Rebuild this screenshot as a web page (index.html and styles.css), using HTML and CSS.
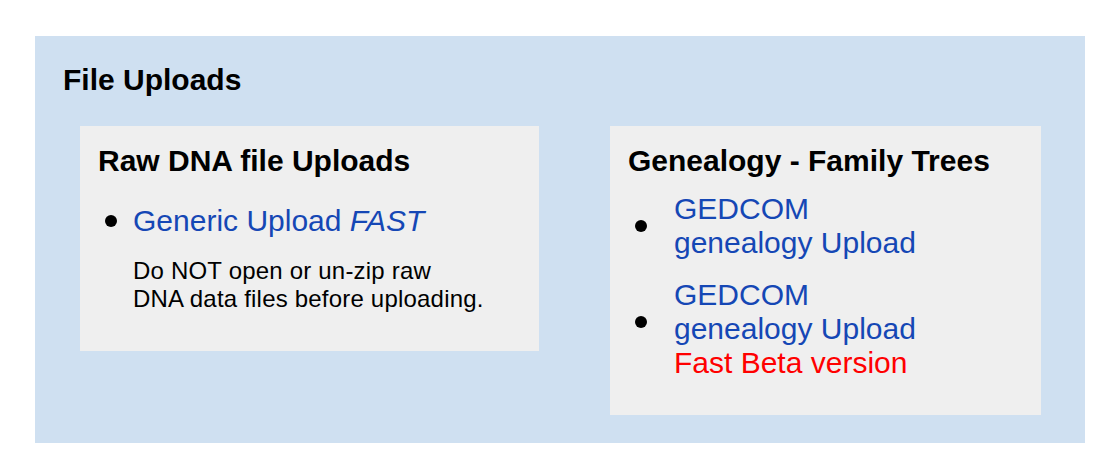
FILE: index.html
```html
<!DOCTYPE html>
<html lang="en">
<head>
    <meta charset="UTF-8">
    <meta name="viewport" content="width=device-width, initial-scale=1.0">
    <title>File Uploads</title>
    <link rel="stylesheet" href="styles.css">
</head>
<body>

    <div class="uploads">
        <h2>File Uploads</h2>

        <div class="panels">
            <!-- Raw DNA -->
            <div class="panel panel-dna">
                <h3>Raw DNA file Uploads</h3>
                <ul class="links links-dna">
                    <li class="item">
                        <span class="dot"></span>
                        <a href="#">Generic Upload <em>FAST</em></a>
                    </li>
                </ul>
                <p class="note">Do NOT open or un-zip raw<br>DNA data files before uploading.</p>
            </div>

            <!-- Genealogy -->
            <div class="panel panel-tree">
                <h3>Genealogy - Family Trees</h3>
                <ul class="links links-tree">
                    <li class="item">
                        <span class="dot"></span>
                        <a href="#">GEDCOM<br>genealogy Upload</a>
                    </li>
                    <li class="item item-beta">
                        <span class="dot"></span>
                        <a href="#">GEDCOM<br>genealogy Upload<br><span class="beta">Fast Beta version</span></a>
                    </li>
                </ul>
            </div>
        </div>
    </div>

</body>
</html>
```

FILE: styles.css
```css
body {
    margin: 0;
    background: #ffffff;
    font-family: 'Liberation Sans', Arial, sans-serif;
    color: #000;
}

.uploads {
    margin: 36px 0 0 35px;
    width: 1050px;
    box-sizing: border-box;
    padding: 27px 44px 28px 28px;
    background-color: #cfe0f1;
}

h2, h3 {
    margin: 0;
    font-size: 30px;
    line-height: 34px;
    font-weight: bold;
}

.panels {
    display: flex;
    align-items: flex-start;
    gap: 71px;
    margin-top: 29px;
    padding-left: 17px;
}

.panel {
    box-sizing: border-box;
    padding: 18px;
    background-color: #efefef;
}

.panel-dna {
    width: 459px;
}

.panel-tree {
    width: 431px;
}

.links {
    list-style: none;
    margin: 0;
    padding: 0;
}

.links-dna {
    margin-top: 26px;
}

.links-tree {
    margin-top: 14px;
    margin-bottom: 17px;
}

.item {
    display: flex;
    align-items: center;
    font-size: 30px;
    line-height: 34px;
}

.item + .item {
    margin-top: 18px;
}

.dot {
    flex: none;
    width: 12px;
    height: 12px;
    margin-left: 7px;
    border-radius: 50%;
    background-color: #000;
}

.links-dna .dot {
    margin-right: 16px;
}

.links-tree .dot {
    margin-right: 27px;
}

.item-beta .dot {
    margin-bottom: 14px;
}

.item a {
    color: #1547b5;
    text-decoration: none;
}

.beta {
    color: #ff0000;
}

.note {
    margin: 19px 0 20px 35px;
    font-size: 24px;
    line-height: 28px;
    letter-spacing: 0.2px;
}
```
